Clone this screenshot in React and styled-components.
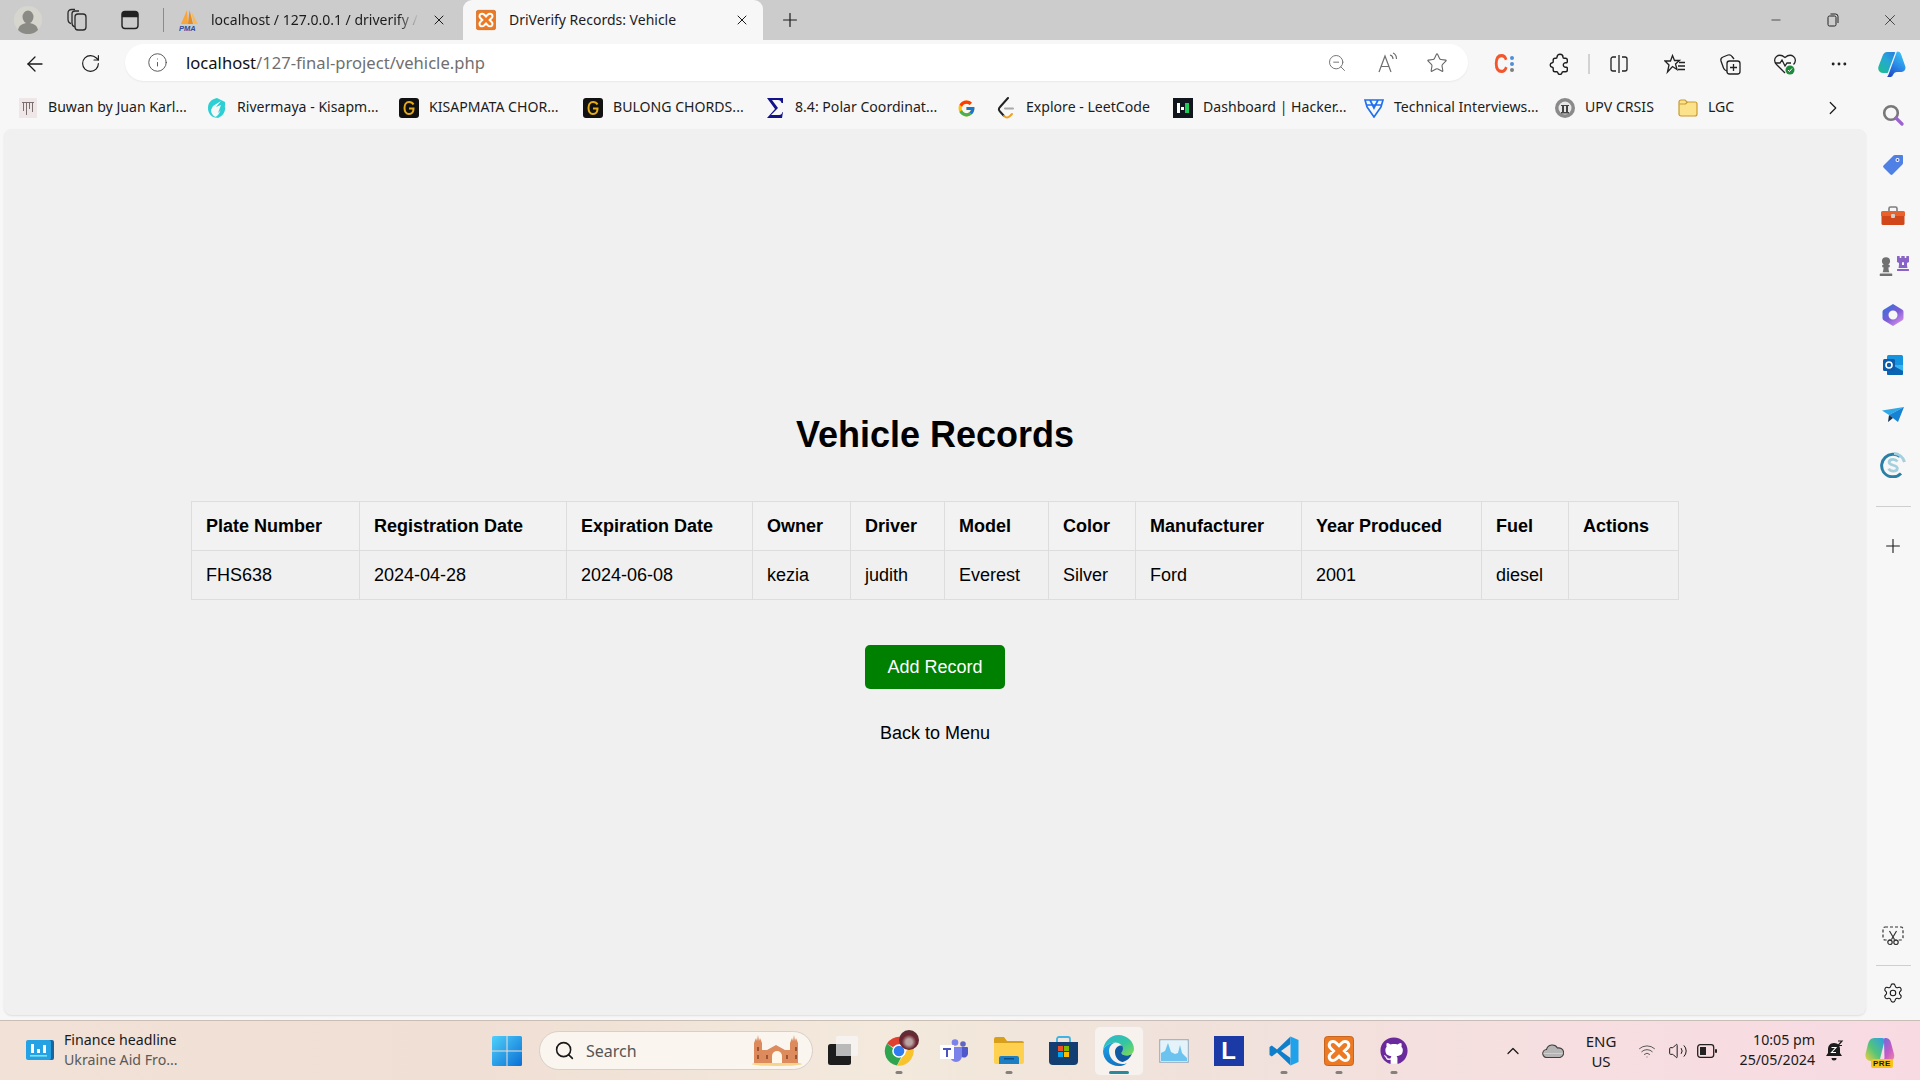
import React from "react";
import styled, { createGlobalStyle } from "styled-components";
import {
  ArrowLeft,
  ChevronRight,
  ChevronUp,
  Ellipsis,
  Info,
  Minus,
  Plus,
  RotateCw,
  Search,
  Settings,
  Star,
  Volume2,
  Wifi,
  X,
  ZoomOut,
} from "lucide-react";
import { FaChessPawn, FaChessRook, FaGithub } from "react-icons/fa";
import { FcGoogle } from "react-icons/fc";

const UI_FONT = `"Noto Sans", "Open Sans", sans-serif`;

const GlobalStyle = createGlobalStyle`
  html, body {
    margin: 0;
    padding: 0;
    height: 100%;
    overflow: hidden;
    background: #f7f7f7;
  }
  * {
    box-sizing: border-box;
  }
`;

const Screen = styled.div`
  width: 1920px;
  height: 1080px;
  display: flex;
  flex-direction: column;
  font-family: ${UI_FONT};
  color: #1a1a1a;
`;

/* tab strip */
const TabStrip = styled.div`
  height: 40px;
  flex: none;
  display: flex;
  align-items: stretch;
  background: #cccccc;
`;

const Cell = styled.div`
  position: relative;
  flex: none;
  width: ${(p) => p.$w}px;
  height: ${(p) => (p.$h ? `${p.$h}px` : "auto")};
  display: flex;
  align-items: center;
  justify-content: center;
`;

const StripDivider = styled.div`
  flex: none;
  width: 1px;
  height: 24px;
  margin: 8px 6px 0 1px;
  background: #8a8a8a;
`;

const Tab = styled.div`
  flex: none;
  width: ${(p) => p.$w}px;
  margin-right: ${(p) => (p.$active ? 0 : 3)}px;
  display: flex;
  align-items: center;
  gap: ${(p) => (p.$active ? 13 : 12)}px;
  padding: 0 13px 0 ${(p) => (p.$active ? 13 : 9)}px;
  background: ${(p) => (p.$active ? "#f7f7f7" : "transparent")};
  border-radius: 9px 9px 0 0;
`;

const TabTitle = styled.span`
  flex: 1;
  min-width: 0;
  padding-bottom: 1px;
  overflow: hidden;
  white-space: nowrap;
  font-size: 14px;
  color: #1c1c1c;
  mask-image: ${(p) => (p.$fade ? "linear-gradient(90deg, #000 90%, transparent 100%)" : "none")};
`;

const Grow = styled.div`
  flex: 1;
`;

const WindowControls = styled.div`
  display: flex;
  padding-right: 2px;
`;

/* toolbar */
const Toolbar = styled.div`
  height: 47px;
  flex: none;
  display: flex;
  align-items: center;
  padding-left: 7px;
  background: #f7f7f7;
`;

const AddressBar = styled.div`
  flex: none;
  width: 1343px;
  height: 37px;
  margin: 0 8px 2px 8px;
  display: flex;
  align-items: center;
  padding: 0 6px 0 21px;
  background: #ffffff;
  border-radius: 19px;
  box-shadow: 0 1px 2px rgba(0, 0, 0, 0.06);
`;

const Url = styled.span`
  margin-left: 18px;
  font-size: 16.6px;
  color: #6f6f6f;
  white-space: nowrap;
  b {
    font-weight: 400;
    color: #111111;
  }
`;

const AddressActions = styled.div`
  margin-left: auto;
  display: flex;
  align-items: center;
`;

const ToolDivider = styled.div`
  flex: none;
  width: 2px;
  height: 20px;
  background: #d2d2d2;
`;

const ExtensionC = styled.span`
  display: flex;
  align-items: center;
  gap: 1px;
  font-family: "Liberation Sans", sans-serif;
  font-weight: 700;
  font-size: 27px;
  line-height: 28px;
  color: #f4552a;
`;

const ExtensionLetter = styled.span`
  display: block;
  width: 15px;
  transform: scaleX(0.72);
  transform-origin: left center;
`;

const ExtensionDots = styled.span`
  display: flex;
  flex-direction: column;
  gap: 2px;
`;

const ExtensionDot = styled.span`
  width: 4px;
  height: 4px;
  border-radius: 50%;
  background: ${(p) => p.$c};
`;

/* page body */
const Body = styled.div`
  flex: 1;
  min-height: 0;
  display: flex;
  background: #f7f7f7;
`;

const Main = styled.div`
  flex: 1;
  min-width: 0;
  display: flex;
  flex-direction: column;
`;

const Bookmarks = styled.div`
  height: 42px;
  flex: none;
  display: flex;
  align-items: center;
  padding-left: 18px;
`;

const Bookmark = styled.div`
  flex: none;
  width: ${(p) => p.$w}px;
  display: flex;
  align-items: center;
  gap: 10px;
  font-size: 14.1px;
  line-height: 18px;
  color: #1c1c1c;
  white-space: nowrap;
`;

const BookmarkLabel = styled.span`
  padding-bottom: 2px;
`;

const BookmarkLogo = styled.span`
  flex: none;
  width: 20px;
  height: 20px;
  display: flex;
  align-items: center;
  justify-content: center;
`;

const BookmarkMore = styled.div`
  margin-left: auto;
  width: 66px;
  display: flex;
  justify-content: center;
`;

const Viewport = styled.main`
  flex: 1;
  min-height: 0;
  margin: 0 0 5px 4px;
  padding-top: 285px;
  display: flex;
  flex-direction: column;
  align-items: center;
  background: #f0f0f0;
  border-radius: 8px;
  box-shadow: 0 1px 2px rgba(0, 0, 0, 0.1);
  font-family: "Liberation Sans", Arial, sans-serif;
  color: #000000;
  font-size: 18px;
`;

const Title = styled.h1`
  margin: 0 0 46px;
  font-size: 36px;
  line-height: 41px;
  font-weight: 700;
`;

const RecordTable = styled.table`
  width: 1487px;
  table-layout: fixed;
  border-collapse: collapse;
  border: 1px solid #dddddd;
`;

const Col = styled.col`
  width: ${(p) => p.$w}px;
`;

const HeadCell = styled.th`
  height: 49px;
  padding: 0 0 0 14px;
  border: 1px solid #dddddd;
  background: #f2f2f2;
  text-align: left;
  font-weight: 700;
  white-space: nowrap;
`;

const DataCell = styled.td`
  height: 49px;
  padding: 0 0 0 14px;
  border: 1px solid #dddddd;
  white-space: nowrap;
`;

const AddButton = styled.a`
  width: 140px;
  height: 44px;
  margin-top: 45px;
  display: flex;
  align-items: center;
  justify-content: center;
  background: #008000;
  border-radius: 5px;
  color: #ffffff;
`;

const BackLink = styled.a`
  margin-top: 34px;
  line-height: 20px;
  color: #000000;
`;

/* edge sidebar */
const SideBar = styled.aside`
  flex: none;
  width: 54px;
  display: flex;
  flex-direction: column;
  align-items: center;
  padding-top: 3px;
`;

const SideLine = styled.div`
  flex: none;
  width: 35px;
  height: 1px;
  margin: ${(p) => p.$m};
  background: #cfcfcf;
`;

const ChessStack = styled.span`
  display: flex;
  align-items: flex-end;
`;

const Rook = styled(FaChessRook)`
  margin: 0 0 5px -1px;
`;

/* taskbar */
const Taskbar = styled.footer`
  height: 60px;
  flex: none;
  display: flex;
  align-items: center;
  border-top: 1px solid #c9beb7;
  background: linear-gradient(
    90deg,
    #f1e1d6 0%,
    #f0dfd4 25%,
    #f3e9dc 46%,
    #f0e2db 62%,
    #f6dfe0 80%,
    #f8dae3 100%
  );
`;

const Widget = styled.div`
  flex: none;
  width: 492px;
  display: flex;
  align-items: center;
  gap: 10px;
  padding: 0 0 2px 26px;
`;

const WidgetText = styled.div`
  font-size: 14.2px;
  line-height: 20px;
  color: #1a1a1a;
`;

const WidgetSub = styled.span`
  display: block;
  color: #5c5856;
`;

const TaskSearch = styled.div`
  flex: none;
  width: 274px;
  height: 39px;
  margin: 0 3px 0 17px;
  display: flex;
  align-items: center;
  gap: 11px;
  padding: 0 10px 0 14px;
  background: #fbf5ef;
  border: 1px solid #d8cfc8;
  border-radius: 20px;
  font-size: 16px;
  color: #555555;
`;

const SearchArt = styled.span`
  margin-left: auto;
  display: flex;
`;

const TaskIcon = styled(Cell)`
  height: 48px;
  margin: ${(p) => (p.$active ? "0 3.5px" : "0")};
  background: ${(p) => (p.$active ? "#f8f2ee" : "transparent")};
  border-radius: 5px;
  box-shadow: ${(p) => (p.$active ? "0 0 0 1px #eee5e0" : "none")};
`;

const RunDot = styled.span`
  position: absolute;
  left: 50%;
  bottom: 1px;
  width: ${(p) => (p.$active ? 20 : 7)}px;
  height: 3px;
  transform: translateX(-50%);
  border-radius: 2px;
  background: ${(p) => (p.$active ? "#2b8a99" : "#86807c")};
`;

const LBlock = styled.span`
  width: 30px;
  height: 30px;
  display: flex;
  align-items: center;
  justify-content: center;
  background: #1b3aa6;
  font-family: "Liberation Sans", sans-serif;
  font-weight: 700;
  font-size: 24px;
  color: #ffffff;
`;

const GithubBadge = styled.span`
  width: 28px;
  height: 28px;
  display: flex;
  align-items: center;
  justify-content: center;
  background: radial-gradient(circle, #ffffff 0 62%, transparent 66%);
  border-radius: 50%;
  color: #6a2a9c;
`;

const Tray = styled.div`
  margin-left: auto;
  display: flex;
  align-items: center;
  padding-right: 15px;
`;

const Lang = styled.div`
  text-align: center;
  font-size: 15px;
  line-height: 20px;
`;

const Clock = styled.div`
  flex: none;
  width: 92px;
  padding-bottom: 2px;
  text-align: right;
  font-size: 14.2px;
  line-height: 20px;
  white-space: nowrap;
`;

const PreTag = styled.span`
  position: absolute;
  left: 16px;
  bottom: -3px;
  padding: 0 2px;
  background: #f8c31a;
  border-radius: 2px;
  font-family: "Liberation Sans", sans-serif;
  font-size: 8px;
  line-height: 9px;
  font-weight: 700;
  letter-spacing: 0.4px;
  color: #1a1a1a;
`;

const ChromeBadge = styled.span`
  position: absolute;
  left: 28px;
  top: 3px;
  width: 20px;
  height: 20px;
  border-radius: 50%;
  background: radial-gradient(circle at 50% 60%, #b9a3a3 0 20%, #6e2530 46%, #453a3e 100%);
`;

/* drawn icons */
const Avatar = () => (
  <svg width="28" height="28" viewBox="0 0 28 28">
    <circle cx="14" cy="14" r="14" fill="#d6d6cf" />
    <ellipse cx="14" cy="11" rx="5.500" ry="6.500" fill="#8b8b85" />
    <path d="M4 24c1-5 5-7 10-7s9 2 10 7c-5 5.500-15 5.500-20 0z" fill="#8b8b85" />
  </svg>
);

const Collections = () => (
  <svg width="22" height="24" viewBox="0 0 22 24" fill="none" stroke="#2b2b2b" strokeWidth="1.300">
    <rect x="9" y="6" width="11" height="16" rx="3" />
    <path d="M9 19c-1.500-.5-3-2-3-4V6c0-1.500 1-3 3-3h4" />
    <path d="M5 15.500C3 15 2 13.500 2 11V5c0-2 1.500-3.500 3.500-3.500H9" />
  </svg>
);

const TabActions = () => (
  <svg width="18" height="20" viewBox="0 0 18 20" fill="none" stroke="#222" strokeWidth="1.400">
    <rect x="1" y="1.500" width="16" height="17" rx="3" />
    <path d="M1.500 6.500h15V4a2.500 2.500 0 0 0-2.500-2H4a2.500 2.500 0 0 0-2.500 2z" fill="#222" />
  </svg>
);

const PmaLogo = () => (
  <svg width="20" height="22" viewBox="0 0 20 22">
    <path d="M2 15 L8 1 L9 15z" fill="#f6a63a" />
    <path d="M9 15 L10.500 1 L14 15z" fill="#e98c1e" />
    <path d="M14.500 15 L12.500 3 L19 15z" fill="#f6b95c" />
    <text x="0" y="21.500" fontSize="7.500" fontStyle="italic" fontWeight="700" fontFamily="Liberation Sans" fill="#2e4a9a">
      PMA
    </text>
  </svg>
);

const XamppLogo = ({ w = 30, h = 30 }) => (
  <svg width={w} height={h} viewBox="0 0 30 30">
    <rect x="0.500" y="0.500" width="29" height="29" rx="3" fill="#ec7a24" stroke="#c9621a" />
    <path
      d="M9 5.500c-3.500 0-5 4-2.500 6.500L9.500 15l-3 3c-2.500 2.500-1 6.500 2.500 6.500 1.500 0 2.500-.7 3.500-1.700L15 20.300l2.500 2.500c1 1 2 1.700 3.500 1.700 3.500 0 5-4 2.500-6.500l-3-3 3-3c2.500-2.500 1-6.500-2.500-6.500-1.500 0-2.500.7-3.500 1.700L15 9.700l-2.500-2.500c-1-1-2-1.700-3.500-1.700z"
      fill="none"
      stroke="#ffffff"
      strokeWidth="3"
    />
  </svg>
);

const Restore = () => (
  <svg width="12" height="14" viewBox="0 0 12 14" fill="none" stroke="#222" strokeWidth="1">
    <rect x="1" y="3" width="8" height="10" rx="1.500" />
    <path d="M3.500 1h5A2.500 2.500 0 0 1 11 3.500V10" />
  </svg>
);

const ReadAloud = () => (
  <svg width="22" height="22" viewBox="0 0 22 22" fill="none" stroke="#6e6e6e" strokeWidth="1.200">
    <path d="M3 20 L9 4 L15 20 M5.200 14.500h7.600" />
    <path d="M14 3c2 .5 3 2 3 4M17 1c2.500 1 3.500 3.500 3.500 6" />
  </svg>
);

const ExtensionPiece = () => (
  <svg width="22" height="22" viewBox="0 0 22 22" fill="none" stroke="#1c1c1c" strokeWidth="1.400" strokeLinejoin="round">
    <path d="M8 4.200C8 2.500 9.300 1.200 11 1.200s3 1.300 3 3c0 .6 .4 1 1 1h1.500c1 0 1.800.8 1.800 1.800V8.800c0 .7-.6 1.100-1.200 1-1.500-.3-2.800.7-2.800 2.200s1.300 2.500 2.800 2.200c.6-.1 1.200.3 1.200 1V17c0 1-.8 1.800-1.800 1.800H14c-.6 0-1 .4-1.100 1-.2 1-1 1.700-2 1.700s-1.800-.7-2-1.700c-.1-.6-.5-1-1.100-1H6c-1 0-1.800-.8-1.800-1.800v-1.700c0-.6-.4-1-1-1.100C2 14 1.200 13.100 1.200 12s.8-2 2-2.200c.6-.1 1-.5 1-1.100V7c0-1 .8-1.800 1.800-1.800h1c.6 0 1-.4 1-1z" />
  </svg>
);

const SplitScreen = () => (
  <svg width="20" height="20" viewBox="0 0 20 20" fill="none" stroke="#222" strokeWidth="1.300">
    <path d="M7 3H4a2 2 0 0 0-2 2v10a2 2 0 0 0 2 2h3M13 3h3a2 2 0 0 1 2 2v10a2 2 0 0 1-2 2h-3M10 1v18" />
  </svg>
);

const Favorites = () => (
  <svg width="22" height="22" viewBox="0 0 22 22" fill="none" stroke="#222" strokeWidth="1.300">
    <path d="M8.500 2.500l2 5h5l-4 3.500 1.500 5.500L8.500 13.500 3.500 19l1.500-7L1 8h5.500z" />
    <path d="M15 9.500h6M14 13h7M14 16.500h7" />
  </svg>
);

const CollectionsAdd = () => (
  <svg width="22" height="22" viewBox="0 0 22 22" fill="none" stroke="#222" strokeWidth="1.300">
    <rect x="8" y="8" width="13" height="13" rx="2.500" />
    <path d="M14.500 11v7M11 14.500h7" />
    <path d="M8 18c-2-.5-3-1.500-3.500-3L2 8c-.5-2 .5-3.500 2-4l5-2c1.500-.5 3 0 4 1.500L15 6" />
  </svg>
);

const HeartCheck = () => (
  <svg width="24" height="24" viewBox="0 0 24 24" fill="none" stroke="#222" strokeWidth="1.300">
    <path d="M12 21 L3.500 12.500C1 10 1 6.500 3.500 4.500c2.500-2 5.500-1.500 8.500 1 3-2.500 6-3 8.500-1 2.500 2 2.500 5.500 0 8" />
    <path d="M2 11h5l2-3 3 6 2-3h4" />
    <circle cx="17" cy="18" r="4.500" fill="#1f8a3b" stroke="none" />
    <path d="M15 18l1.500 1.500 2.500-3" stroke="#fff" strokeWidth="1" />
  </svg>
);

const Copilot = () => (
  <svg width="30" height="30" viewBox="0 0 30 30">
    <defs>
      <linearGradient id="cpA" x1="0" y1="1" x2="0.9" y2="0">
        <stop offset="0" stopColor="#1fc08a" />
        <stop offset="0.6" stopColor="#25a6d8" />
        <stop offset="1" stopColor="#2a7fe0" />
      </linearGradient>
      <linearGradient id="cpB" x1="0.2" y1="1" x2="0.8" y2="0">
        <stop offset="0" stopColor="#1c3fc0" />
        <stop offset="0.5" stopColor="#2a8ae8" />
        <stop offset="1" stopColor="#3cc8f5" />
      </linearGradient>
    </defs>
    <path d="M10 3h7c1.500 0 2 1 1.500 2.500L13 22c-.5 1.300-1.500 2-2.800 2H6C2.500 24 .5 21 1.500 17.500L5.500 7C6.500 4.500 8 3 10 3z" fill="url(#cpA)" />
    <path d="M20.500 2c2 0 3.500 1.300 4.300 3.500l4 11.500c1 3.500-1 6.500-4.500 6.500h-4.500c-1.500 0-2.500.8-3 2.300-.5 1.500-1.500 2.700-3 2.700H7c1.800 0 3-1 3.800-2.800L18.500 4.500C19 3 19.500 2 20.500 2z" fill="url(#cpB)" stroke="#f7f7f7" strokeWidth="1.200" />
  </svg>
);

const CopilotPre = () => (
  <svg width="30" height="28" viewBox="0 0 30 28">
    <defs>
      <linearGradient id="cpC" x1="0" y1="1" x2="1" y2="0">
        <stop offset="0" stopColor="#f2cf3b" />
        <stop offset="0.45" stopColor="#54c47a" />
        <stop offset="1" stopColor="#2c9de8" />
      </linearGradient>
      <linearGradient id="cpD" x1="0" y1="0" x2="1" y2="1">
        <stop offset="0" stopColor="#5d6de0" />
        <stop offset="0.6" stopColor="#c65bc6" />
        <stop offset="1" stopColor="#f08aa0" />
      </linearGradient>
    </defs>
    <path d="M9 1h8c2 0 3 1 2.500 3L15 22c-.5 1.500-2 2-3 2H6C2 24 0 21 .5 17L3 7C4 3 6 1 9 1z" fill="url(#cpC)" />
    <path d="M20 1c3 0 5 1 6 5l3 11c1 4-1 7-5 7h-8c2 0 3-1 3.500-3L19 4c.3-2 0-3 1-3z" fill="url(#cpD)" />
  </svg>
);

const Buwan = () => (
  <svg width="18" height="20" viewBox="0 0 18 20">
    <rect width="18" height="20" fill="#efe7e7" />
    <path d="M3 4h12v1H3zM4 5h1v8H4zM7 5h1v12H7zM10 5h1v6h-1zM13 5h1v9h-1z" fill="#7c6f70" />
  </svg>
);

const Rivermaya = () => (
  <svg width="20" height="22" viewBox="0 0 20 22">
    <path d="M10 1L18 5v4l-7 7 3-8-5 2 5-6-8 5-2 4c0 4 3 7 7 8C5 21 1 17 1 11S5 2 10 1z" fill="#2ccfd3" />
    <path d="M14 11l4-2c1 5-2 10-7 12l-3-1c3-1 5-4 6-9z" fill="#2ccfd3" />
  </svg>
);

const Chords = () => (
  <svg width="20" height="20" viewBox="0 0 20 20" fill="none">
    <rect width="20" height="20" rx="3" fill="#111" />
    <path d="M14.500 6.500C13.500 4.500 12 4 10 4 7 4 5.500 7 5.500 10S7 16 10 16s4.500-2 4.500-5.500H10" stroke="#e4ac1a" strokeWidth="2" />
  </svg>
);

const Sigma = () => (
  <svg width="18" height="20" viewBox="0 0 18 20">
    <path d="M1 0h16v5h-1.500c-.5-2-1.500-3-3.500-3H6l6 8-7 7h8c2 0 3-1 3.500-3H17l-1 6H1l8-9z" fill="#12128c" />
  </svg>
);

const LeetCode = () => (
  <svg width="18" height="22" viewBox="0 0 18 22" fill="none" strokeLinecap="round">
    <path d="M11 1L3 10c-1.500 1.500-1.500 3 0 4.500l4 4.500" stroke="#222" strokeWidth="2" />
    <path d="M7 19c2 2 4 2 6 0l2-2" stroke="#f0a020" strokeWidth="2" />
    <path d="M8 11.500h8" stroke="#a8a8a8" strokeWidth="2" />
  </svg>
);

const HackerRank = () => (
  <svg width="20" height="20" viewBox="0 0 20 20">
    <rect width="20" height="20" fill="#10151e" />
    <rect x="4" y="5" width="3" height="10" fill="#fff" />
    <rect x="8" y="9" width="3" height="3" fill="#fff" />
    <rect x="12" y="5" width="4" height="10" fill="#1fc95a" />
  </svg>
);

const Interviews = () => (
  <svg width="20" height="20" viewBox="0 0 20 20" fill="none" stroke="#1f6fef" strokeWidth="1.700">
    <path d="M1 2h18l-2 7-7 10-7-10zM6 2l4 8 4-8M3 7h14" />
  </svg>
);

const Seal = () => (
  <svg width="20" height="20" viewBox="0 0 20 20">
    <circle cx="10" cy="10" r="10" fill="#8a8a8a" />
    <circle cx="10" cy="10" r="6.500" fill="#e8e8e8" />
    <path d="M6 7h8v1H6zM7 8h2v6H7zM11 8h2v6h-2zM6 14h8v1.500H6z" fill="#444" />
  </svg>
);

const Folder = () => (
  <svg width="20" height="18" viewBox="0 0 20 18">
    <path d="M1 3a2 2 0 0 1 2-2h4l2 2h8a2 2 0 0 1 2 2v10a2 2 0 0 1-2 2H3a2 2 0 0 1-2-2z" fill="#fde28c" stroke="#c99a2e" strokeWidth="1.200" />
    <path d="M1.500 5h6l2-2" fill="none" stroke="#c99a2e" strokeWidth="1.200" />
  </svg>
);

const SideSearch = () => (
  <svg width="22" height="22" viewBox="0 0 22 22" fill="none">
    <circle cx="9" cy="9" r="6.800" stroke="#787878" strokeWidth="2.600" />
    <path d="M14 14l6 6" stroke="#9a63d0" strokeWidth="3.200" strokeLinecap="round" />
  </svg>
);

const TagIcon = () => (
  <svg width="22" height="22" viewBox="0 0 22 22">
    <path d="M13 1h7a1 1 0 0 1 1 1v7a2 2 0 0 1-.6 1.400L10.500 20.500a1.500 1.500 0 0 1-2 0l-7-7a1.500 1.500 0 0 1 0-2L11.500 1.600A2 2 0 0 1 13 1z" fill="#4f80e6" />
    <circle cx="15.500" cy="6" r="2" fill="#fff" />
    <circle cx="15.500" cy="6" r="1" fill="#2a4fb0" />
  </svg>
);

const ToolboxIcon = () => (
  <svg width="24" height="19" viewBox="0 0 24 19">
    <path d="M8 5V2.500A1.500 1.500 0 0 1 9.500 1h5A1.500 1.500 0 0 1 16 2.500V5" fill="none" stroke="#7d7d7d" strokeWidth="1.600" />
    <path d="M1.500 5h21A1.500 1.500 0 0 1 24 6.500V10H0V6.500A1.500 1.500 0 0 1 1.500 5z" fill="#e8622c" />
    <path d="M.5 10h23v7.500a1.500 1.500 0 0 1-1.500 1.500H2a1.500 1.500 0 0 1-1.500-1.500z" fill="#d2471a" />
    <rect x="10" y="8" width="4" height="4" rx="1" fill="#cfcfcf" />
  </svg>
);

const M365 = () => (
  <svg width="22" height="24" viewBox="0 0 22 24">
    <defs>
      <linearGradient id="msA" x1="0" y1="0.1" x2="0.7" y2="1">
        <stop offset="0" stopColor="#2f74dc" />
        <stop offset="0.55" stopColor="#7b5bd6" />
        <stop offset="1" stopColor="#cf8de8" />
      </linearGradient>
    </defs>
    <path fillRule="evenodd" d="M11 1l9 5.500c1 .6 1.500 1.500 1.500 2.500v6c0 1-.5 2-1.500 2.500L11 23 2 17.500C1 17 .5 16 .5 15V9c0-1 .5-1.900 1.500-2.500zM11 7.500a4.500 4.500 0 1 0 0 9 4.500 4.500 0 0 0 0-9z" fill="url(#msA)" />
  </svg>
);

const Outlook = () => (
  <svg width="20" height="20" viewBox="0 0 20 20">
    <rect x="4" width="16" height="20" rx="1.500" fill="#1493df" />
    <path d="M4 10h16v8.500a1.500 1.500 0 0 1-1.500 1.500H5.500A1.500 1.500 0 0 1 4 18.500z" fill="#0a64b4" />
    <path d="M9 10l11 6v-6z" fill="#36b4f0" />
    <rect y="4" width="12" height="12" rx="1.500" fill="#0e5aab" />
    <circle cx="6" cy="10" r="3" fill="none" stroke="#fff" strokeWidth="1.600" />
  </svg>
);

const SendIcon = () => (
  <svg width="22" height="16" viewBox="0 0 22 16">
    <path d="M0 3.500L22 0 7 8z" fill="#2fa8e8" />
    <path d="M22 0L7 8 16 15z" fill="#1682d4" />
    <path d="M7 8l-1 7 5-4z" fill="#12324f" />
  </svg>
);

const SkypeS = () => (
  <svg width="26" height="26" viewBox="0 0 26 26" fill="none">
    <path d="M20 4.500A11.500 11.500 0 0 0 3.500 20a11.500 11.500 0 0 0 17.500 1.500" stroke="#2a7fa5" strokeWidth="3" />
    <path d="M14 1.600a11.500 11.500 0 0 1 10.500 8.400" stroke="#a4d0dd" strokeWidth="3" />
    <path d="M17.500 9.500C16.300 8 14.800 7.300 13 7.300c-2.200 0-3.900 1.100-3.900 3 0 3.900 8.200 2 8.200 5.900 0 1.900-1.900 3-4.100 3-1.900 0-3.600-.8-4.600-2.400" stroke="#a4d0dd" strokeWidth="2.800" />
  </svg>
);

const Snip = () => (
  <svg width="22" height="20" viewBox="0 0 22 20" fill="none" stroke="#333" strokeWidth="1.200">
    <rect x="1" y="1" width="20" height="13" rx="2" strokeDasharray="3 2" />
    <path d="M7.500 5l5 8.500M14.500 5l-5 8.500" />
    <circle cx="8" cy="16.300" r="2.200" />
    <circle cx="14" cy="16.300" r="2.200" />
  </svg>
);

const FinanceTile = () => (
  <svg width="28" height="20" viewBox="0 0 28 20">
    <rect x="4" width="24" height="20" rx="2" fill="#17669f" />
    <rect width="25" height="20" rx="2" fill="#25a2e4" />
    <path d="M5 4h3v9H5zM11 9h3v4h-3zM17 5h3v8h-3z" fill="#fff" />
    <rect x="4" y="15" width="17" height="1.600" fill="#7fe3f5" />
  </svg>
);

const StartLogo = () => (
  <svg width="30" height="30" viewBox="0 0 30 30">
    <defs>
      <linearGradient id="winA" x1="0" y1="0" x2="1" y2="1">
        <stop offset="0" stopColor="#4fd0fb" />
        <stop offset="1" stopColor="#0a6fd4" />
      </linearGradient>
    </defs>
    <path d="M0 1.500A1.500 1.500 0 0 1 1.500 0h13v14.500H0zM15.500 0h13A1.500 1.500 0 0 1 30 1.500v13H15.500zM0 15.500h14.500V30h-13A1.500 1.500 0 0 1 0 28.500zM15.500 15.500H30v13a1.500 1.500 0 0 1-1.500 1.500h-13z" fill="url(#winA)" />
  </svg>
);

const Castle = () => (
  <svg width="50" height="31" viewBox="0 0 50 31">
    <ellipse cx="25" cy="29" rx="25" ry="2" fill="#f4d58a" />
    <path d="M2 28V8l2-5 1 3 1-6 1 6 1-3 2 5v7h5l9-5 9 5h5V8l2-5 1 3 1-6 1 6 1-3 2 5v20z" fill="#dd8a5c" />
    <path d="M20 28v-7a5 5 0 0 1 10 0v7z" fill="#fff6ea" />
    <path d="M5 12h2v4H5zM43 12h2v4h-2zM5 20h2v4H5zM43 20h2v4h-2zM14 20h2v4h-2zM34 20h2v4h-2z" fill="#9c5433" />
  </svg>
);

const TaskView = () => (
  <svg width="32" height="30" viewBox="0 0 32 30">
    <rect x="0" y="8" width="23" height="21" rx="2.500" fill="#1d1d1d" />
    <rect x="8" y="0" width="22" height="20" rx="2" fill="#f5f3f1" fillOpacity="0.9" />
    <rect x="8" y="8" width="15" height="12" fill="#b9b9b9" />
  </svg>
);

const Chrome = () => (
  <svg width="30" height="30" viewBox="0 0 30 30">
    <path d="M15 15L3 7.500A14.500 14.500 0 0 1 28 8.500H15z" fill="#e0402f" />
    <path d="M3 7.500A14.500 14.500 0 0 0 13 29.500l5-10z" fill="#2ea44f" />
    <path d="M28 8.500A14.500 14.500 0 0 1 13 29.500l7.500-12z" fill="#f8c32b" />
    <circle cx="15" cy="15" r="6.800" fill="#fff" />
    <circle cx="15" cy="15" r="5.300" fill="#2f7bf0" />
  </svg>
);

const Teams = () => (
  <svg width="28" height="24" viewBox="0 0 28 24">
    <circle cx="23" cy="5" r="2.800" fill="#6264c4" />
    <circle cx="15" cy="3.500" r="3.300" fill="#7b83eb" />
    <path d="M17 8h10a1 1 0 0 1 1 1v6a4 4 0 0 1-6 3z" fill="#5059c9" />
    <path d="M9 8h13v9a6 6 0 0 1-12 0z" fill="#7b83eb" />
    <rect x="0" y="6" width="14" height="14" fill="#fff" />
    <path d="M3 9h8v2H8v7H6v-7H3z" fill="#4b53bc" />
  </svg>
);

const Explorer = () => (
  <svg width="30" height="27" viewBox="0 0 30 27">
    <path d="M0 2a2 2 0 0 1 2-2h8l3 4h15a2 2 0 0 1 2 2v4H0z" fill="#d8a01a" />
    <path d="M0 6h30v19a2 2 0 0 1-2 2H2a2 2 0 0 1-2-2z" fill="#fdd14f" />
    <path d="M5 27v-6a2 2 0 0 1 2-2h16a2 2 0 0 1 2 2v6z" fill="#1c7fc4" />
    <rect x="10" y="21" width="10" height="1.500" fill="#0c4f86" />
  </svg>
);

const Store = () => (
  <svg width="29" height="29" viewBox="0 0 29 29">
    <path d="M8 6V3a2 2 0 0 1 2-2h9a2 2 0 0 1 2 2v3" fill="none" stroke="#3bb4e8" strokeWidth="1.800" />
    <path d="M0 6h29v19a4 4 0 0 1-4 4H4a4 4 0 0 1-4-4z" fill="#123e72" />
    <rect x="9" y="10" width="5" height="5" fill="#f25022" />
    <rect x="15" y="10" width="5" height="5" fill="#7fba00" />
    <rect x="9" y="16" width="5" height="5" fill="#00a4ef" />
    <rect x="15" y="16" width="5" height="5" fill="#ffb900" />
  </svg>
);

const Edge = () => (
  <svg width="31" height="31" viewBox="0 0 31 31">
    <defs>
      <linearGradient id="edA" x1="0" y1="0" x2="1" y2="1">
        <stop offset="0" stopColor="#2bb8d8" />
        <stop offset="0.55" stopColor="#35c6a0" />
        <stop offset="1" stopColor="#86dc4f" />
      </linearGradient>
      <linearGradient id="edB" x1="0" y1="0" x2="0" y2="1">
        <stop offset="0" stopColor="#22a6ea" />
        <stop offset="1" stopColor="#0e74c4" />
      </linearGradient>
    </defs>
    <path d="M15.500 0C24 0 31 6.500 31 14c0 4-3.500 6.500-7.500 6.500-3 0-5-1-5-2.500 0-1 1.500-1.500 1.500-4 0-3.500-3.500-6.500-7.500-6.500C7 7.500 1.500 10.500 0 16 .5 7 7 0 15.500 0z" fill="url(#edA)" />
    <path d="M0 16c1.500-5.500 7-8.500 12.500-8.500-4 1-6.500 4.500-6.500 8.500 0 7 6 13 14 13 1.500 0 3-.3 4-.8C21.500 30.200 18.500 31 15.500 31 7 31 0 24.500 0 16z" fill="url(#edB)" />
    <path d="M12 17c0-4 3-6.500 6-6.500 1.500 0 2 1 2 3.500 0 2.500-1.500 3-1.500 4 0 1.500 2 2.500 5 2.500 2 0 4-.5 5.500-2-1.500 4-5 7.500-9.500 8.500C15 26 12 22 12 17z" fill="#0f5aa0" />
  </svg>
);

const TaskManager = () => (
  <svg width="30" height="24" viewBox="0 0 30 24">
    <rect x="0.500" y="0.500" width="29" height="23" rx="1.500" fill="#e4f2fa" stroke="#a7b6c2" strokeWidth="1.500" />
    <path d="M2 22V14l4-2 3-8 3 9 4 2 3-1 2-8 2 8 5 5v3z" fill="#6dc3ef" />
  </svg>
);

const CodeLogo = () => (
  <svg width="30" height="30" viewBox="0 0 30 30">
    <path d="M21.500 .5L8 13.500 2.800 9.600.5 11v8l2.300 1.400L8 16.500l13.500 13V22L12 15l9.500-7z" fill="#0f7fcc" />
    <path d="M21.500 .5L29.500 4v22l-8 3.500z" fill="#1fa2ea" />
  </svg>
);

const OneDrive = () => (
  <svg width="22" height="14" viewBox="0 0 22 14">
    <path d="M5 13.500a4 4 0 0 1-.5-8 6 6 0 0 1 11-1.500 4.800 4.800 0 0 1 2.500 9.500z" fill="#b5b5b5" stroke="#3f3f3f" strokeWidth="1.100" />
    <path d="M1.500 9.500h19" stroke="#e9e9e9" strokeWidth="0.500" />
  </svg>
);

const Battery = () => (
  <svg width="20" height="14" viewBox="0 0 20 14">
    <rect x="0.700" y="0.700" width="16" height="12.600" rx="2.500" fill="none" stroke="#222" strokeWidth="1.300" />
    <rect x="3" y="3" width="6" height="8" fill="#222" />
    <rect x="18" y="5" width="2" height="4" rx="1" fill="#222" />
  </svg>
);

const QuietBell = () => (
  <svg width="18" height="22" viewBox="0 0 18 22">
    <path d="M8 3c-4 0-6 3-6 6v4l-2 3h16l-2-3V9c0-3-2-6-6-6z" fill="#1c1c1c" />
    <path d="M5.500 18h5a2.500 2.500 0 0 1-5 0z" fill="#1c1c1c" />
    <path d="M5.500 7.500h4.500l-4.500 5h4.500" stroke="#fff" strokeWidth="1.100" fill="none" />
    <path d="M12 1h4l-4 4.500h4" stroke="#1c1c1c" strokeWidth="1.200" fill="none" />
  </svg>
);

const columns = [
  { label: "Plate Number", value: "FHS638", w: 168 },
  { label: "Registration Date", value: "2024-04-28", w: 207 },
  { label: "Expiration Date", value: "2024-06-08", w: 186 },
  { label: "Owner", value: "kezia", w: 98 },
  { label: "Driver", value: "judith", w: 94 },
  { label: "Model", value: "Everest", w: 104 },
  { label: "Color", value: "Silver", w: 87 },
  { label: "Manufacturer", value: "Ford", w: 166 },
  { label: "Year Produced", value: "2001", w: 180 },
  { label: "Fuel", value: "diesel", w: 87 },
  { label: "Actions", value: "", w: 110 },
];

const bookmarks = [
  { w: 189, text: "Buwan by Juan Karl...", logo: <Buwan /> },
  { w: 192, text: "Rivermaya - Kisapm...", logo: <Rivermaya /> },
  { w: 184, text: "KISAPMATA CHOR...", logo: <Chords /> },
  { w: 182, text: "BULONG CHORDS...", logo: <Chords /> },
  { w: 191, text: "8.4: Polar Coordinat...", logo: <Sigma /> },
  { w: 40, text: "", logo: <FcGoogle size={19} /> },
  { w: 177, text: "Explore - LeetCode", logo: <LeetCode /> },
  { w: 191, text: "Dashboard | Hacker...", logo: <HackerRank /> },
  { w: 191, text: "Technical Interviews...", logo: <Interviews /> },
  { w: 123, text: "UPV CRSIS", logo: <Seal /> },
  { w: 60, text: "LGC", logo: <Folder /> },
];

const sideApps = [
  <SideSearch key="search" />,
  <TagIcon key="tag" />,
  <ToolboxIcon key="tools" />,
  <ChessStack key="games">
    <FaChessPawn size={20} color="#707070" />
    <Rook size={16} color="#8a63c9" />
  </ChessStack>,
  <M365 key="m365" />,
  <Outlook key="outlook" />,
  <SendIcon key="send" />,
  <SkypeS key="s" />,
];

const taskApps = [
  { key: "view", icon: <TaskView /> },
  { key: "chrome", icon: <Chrome />, running: true, badge: true },
  { key: "teams", icon: <Teams /> },
  { key: "files", icon: <Explorer />, running: true },
  { key: "store", icon: <Store /> },
  { key: "edge", icon: <Edge />, running: true, active: true },
  { key: "monitor", icon: <TaskManager /> },
  { key: "l", icon: <LBlock>L</LBlock> },
  { key: "code", icon: <CodeLogo />, running: true },
  { key: "xampp", icon: <XamppLogo />, running: true },
  {
    key: "github",
    icon: (
      <GithubBadge>
        <FaGithub size={28} />
      </GithubBadge>
    ),
    running: true,
  },
];

const App = () => {
  return (
    <Screen>
      <GlobalStyle />
      <TabStrip>
        <Cell $w={56}>
          <Avatar />
        </Cell>
        <Cell $w={42}>
          <Collections />
        </Cell>
        <Cell $w={64}>
          <TabActions />
        </Cell>
        <StripDivider />
        <Tab $w={290}>
          <PmaLogo />
          <TabTitle $fade>localhost / 127.0.0.1 / driverify / v</TabTitle>
          <X size={16} strokeWidth={1.500} />
        </Tab>
        <Tab $w={300} $active>
          <XamppLogo w={20} h={22} />
          <TabTitle>DriVerify Records: Vehicle</TabTitle>
          <X size={16} strokeWidth={1.500} />
        </Tab>
        <Cell $w={54}>
          <Plus size={22} strokeWidth={1.300} />
        </Cell>
        <Grow />
        <WindowControls>
          <Cell $w={57}>
            <Minus size={14} strokeWidth={1.200} />
          </Cell>
          <Cell $w={57}>
            <Restore />
          </Cell>
          <Cell $w={57}>
            <X size={18} strokeWidth={1} />
          </Cell>
        </WindowControls>
      </TabStrip>

      <Toolbar>
        <Cell $w={56}>
          <ArrowLeft size={24} strokeWidth={1.300} />
        </Cell>
        <Cell $w={54}>
          <RotateCw size={21} strokeWidth={1.300} />
        </Cell>
        <AddressBar>
          <Cell $w={22}>
            <Info size={21} strokeWidth={1.100} color="#555" />
          </Cell>
          <Url>
            <b>localhost</b>/127-final-project/vehicle.php
          </Url>
          <AddressActions>
            <Cell $w={50}>
              <ZoomOut size={20} strokeWidth={1.200} color="#777" />
            </Cell>
            <Cell $w={50}>
              <ReadAloud />
            </Cell>
            <Cell $w={50}>
              <Star size={22} strokeWidth={1.200} color="#666" />
            </Cell>
          </AddressActions>
        </AddressBar>
        <Cell $w={56}>
          <ExtensionC>
            <ExtensionLetter>C</ExtensionLetter>
            <ExtensionDots>
              <ExtensionDot $c="#4f8fd8" />
              <ExtensionDot $c="#4f8fd8" />
              <ExtensionDot $c="#7f7f7f" />
            </ExtensionDots>
          </ExtensionC>
        </Cell>
        <Cell $w={56}>
          <ExtensionPiece />
        </Cell>
        <ToolDivider />
        <Cell $w={58}>
          <SplitScreen />
        </Cell>
        <Cell $w={54}>
          <Favorites />
        </Cell>
        <Cell $w={56}>
          <CollectionsAdd />
        </Cell>
        <Cell $w={54}>
          <HeartCheck />
        </Cell>
        <Cell $w={54}>
          <Ellipsis size={20} strokeWidth={1.500} />
        </Cell>
        <Cell $w={52}>
          <Copilot />
        </Cell>
      </Toolbar>

      <Body>
        <Main>
          <Bookmarks>
            {bookmarks.map((item) => (
              <Bookmark key={item.text || "google"} $w={item.w}>
                <BookmarkLogo>{item.logo}</BookmarkLogo>
                {item.text && <BookmarkLabel>{item.text}</BookmarkLabel>}
              </Bookmark>
            ))}
            <BookmarkMore>
              <ChevronRight size={22} strokeWidth={1.300} />
            </BookmarkMore>
          </Bookmarks>
          <Viewport>
            <Title>Vehicle Records</Title>
            <RecordTable>
              <colgroup>
                {columns.map((col) => (
                  <Col key={col.label} $w={col.w} />
                ))}
              </colgroup>
              <thead>
                <tr>
                  {columns.map((col) => (
                    <HeadCell key={col.label}>{col.label}</HeadCell>
                  ))}
                </tr>
              </thead>
              <tbody>
                <tr>
                  {columns.map((col) => (
                    <DataCell key={col.label}>{col.value}</DataCell>
                  ))}
                </tr>
              </tbody>
            </RecordTable>
            <AddButton>Add Record</AddButton>
            <BackLink>Back to Menu</BackLink>
          </Viewport>
        </Main>
        <SideBar>
          {sideApps.map((icon) => (
            <Cell key={icon.key} $w={54} $h={50}>
              {icon}
            </Cell>
          ))}
          <SideLine $m="16px 0 19px" />
          <Cell $w={54} $h={40}>
            <Plus size={22} strokeWidth={1.200} />
          </Cell>
          <Grow />
          <Cell $w={54} $h={50}>
            <Snip />
          </Cell>
          <SideLine $m="4px 0 0" />
          <Cell $w={54} $h={54}>
            <Settings size={22} strokeWidth={1.200} />
          </Cell>
        </SideBar>
      </Body>

      <Taskbar>
        <Widget>
          <FinanceTile />
          <WidgetText>
            Finance headline
            <WidgetSub>Ukraine Aid Fro...</WidgetSub>
          </WidgetText>
        </Widget>
        <Cell $w={30}>
          <StartLogo />
        </Cell>
        <TaskSearch>
          <Search size={21} strokeWidth={1.800} color="#1a1a1a" />
          Search
          <SearchArt>
            <Castle />
          </SearchArt>
        </TaskSearch>
        {taskApps.map((app) => (
          <TaskIcon key={app.key} $w={app.active ? 48 : 55} $active={app.active}>
            {app.icon}
            {app.badge && <ChromeBadge />}
            {app.running && <RunDot $active={app.active} />}
          </TaskIcon>
        ))}
        <Tray>
          <Cell $w={40}>
            <ChevronUp size={20} strokeWidth={1.500} />
          </Cell>
          <Cell $w={40}>
            <OneDrive />
          </Cell>
          <Cell $w={56}>
            <Lang>
              ENG
              <br />
              US
            </Lang>
          </Cell>
          <Cell $w={36}>
            <Wifi size={18} strokeWidth={1.300} color="#555" />
          </Cell>
          <Cell $w={26}>
            <Volume2 size={20} strokeWidth={1.200} />
          </Cell>
          <Cell $w={32}>
            <Battery />
          </Cell>
          <Clock>
            10:05 pm
            <br />
            25/05/2024
          </Clock>
          <Cell $w={40}>
            <QuietBell />
          </Cell>
          <Cell $w={50}>
            <CopilotPre />
            <PreTag>PRE</PreTag>
          </Cell>
        </Tray>
      </Taskbar>
    </Screen>
  );
};

export default App;
